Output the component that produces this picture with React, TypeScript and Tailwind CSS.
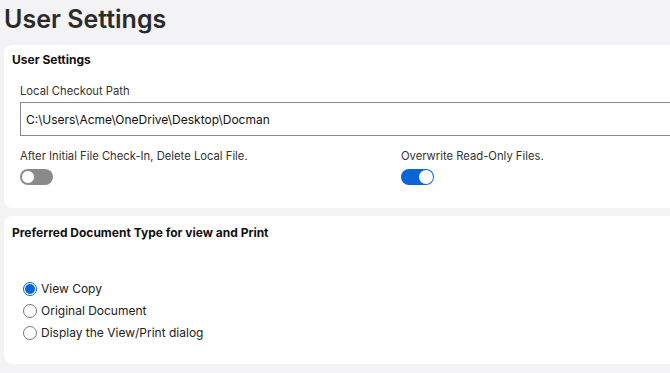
import { useState } from "react";

function Toggle({ on, onChange }: { on: boolean; onChange: () => void }) {
  return (
    <button
      type="button"
      onClick={onChange}
      className={`flex h-4 w-[33px] items-center rounded-full p-[1px] ${
        on ? "bg-[#0a66d8] justify-end" : "bg-[#8a8a8a] justify-start"
      }`}
    >
      <span
        className={`h-[14px] w-[14px] rounded-full bg-white ${
          on ? "" : "border border-[#8a8a8a]"
        }`}
      />
    </button>
  );
}

function Radio({
  label,
  checked,
  onSelect,
}: {
  label: string;
  checked: boolean;
  onSelect: () => void;
}) {
  return (
    <label className="flex h-[22px] cursor-pointer items-center gap-[4px]" onClick={onSelect}>
      <span
        className={`flex h-[14px] w-[14px] items-center justify-center rounded-full border bg-white ${
          checked ? "border-[#0a66d8]" : "border-[#767676]"
        }`}
      >
        {checked && <span className="h-[10px] w-[10px] rounded-full bg-[#0a66d8]" />}
      </span>
      <span className="text-[12px] text-[#222]">{label}</span>
    </label>
  );
}

export default function App() {
  const [deleteLocal, setDeleteLocal] = useState(false);
  const [overwrite, setOverwrite] = useState(true);
  const [docType, setDocType] = useState("view");

  return (
    <div
      className="h-[373px] w-[670px] overflow-hidden bg-[#f3f2f5] text-[#333]"
      style={{ fontFamily: "Inter, 'Noto Sans', sans-serif" }}
    >
      <div className="w-[800px] pl-1">
        <h1 className="pt-[1px] text-[25px] font-semibold leading-[36px] text-[#2b2b2b]">User Settings</h1>

        <section className="mt-[8px] h-[163px] rounded-lg bg-white px-2 pt-[7px]">
          <h2 className="text-[12px] font-bold leading-[16px] text-[#111]">User Settings</h2>
          <div className="px-2 pt-[15px]">
            <div className="text-[11.25px] leading-[16px]">Local Checkout Path</div>
            <input
              className="mt-[3px] h-[34px] w-full border border-[#8a8a8a] px-[5px] text-[12px] text-[#111] outline-none"
              defaultValue="C:\Users\Acme\OneDrive\Desktop\Docman"
            />
            <div className="mt-[12px] grid grid-cols-[381px_1fr] gap-0">
              <div>
                <div className="text-[11.25px] leading-[16px]">After Initial File Check-In, Delete Local File.</div>
                <div className="mt-[5px]">
                  <Toggle on={deleteLocal} onChange={() => setDeleteLocal(!deleteLocal)} />
                </div>
              </div>
              <div>
                <div className="text-[11.25px] leading-[16px]">Overwrite Read-Only Files.</div>
                <div className="mt-[5px]">
                  <Toggle on={overwrite} onChange={() => setOverwrite(!overwrite)} />
                </div>
              </div>
            </div>
          </div>
        </section>

        <section className="mt-[8px] h-[148px] rounded-lg bg-white px-2 pt-[9px]">
          <h2 className="text-[12px] font-bold leading-[16px] text-[#111]">
            Preferred Document Type for view and Print
          </h2>
          <div className="pl-[11px] pt-[37px]">
            <Radio label="View Copy" checked={docType === "view"} onSelect={() => setDocType("view")} />
            <Radio
              label="Original Document"
              checked={docType === "original"}
              onSelect={() => setDocType("original")}
            />
            <Radio
              label="Display the View/Print dialog"
              checked={docType === "dialog"}
              onSelect={() => setDocType("dialog")}
            />
          </div>
        </section>
      </div>
    </div>
  );
}
